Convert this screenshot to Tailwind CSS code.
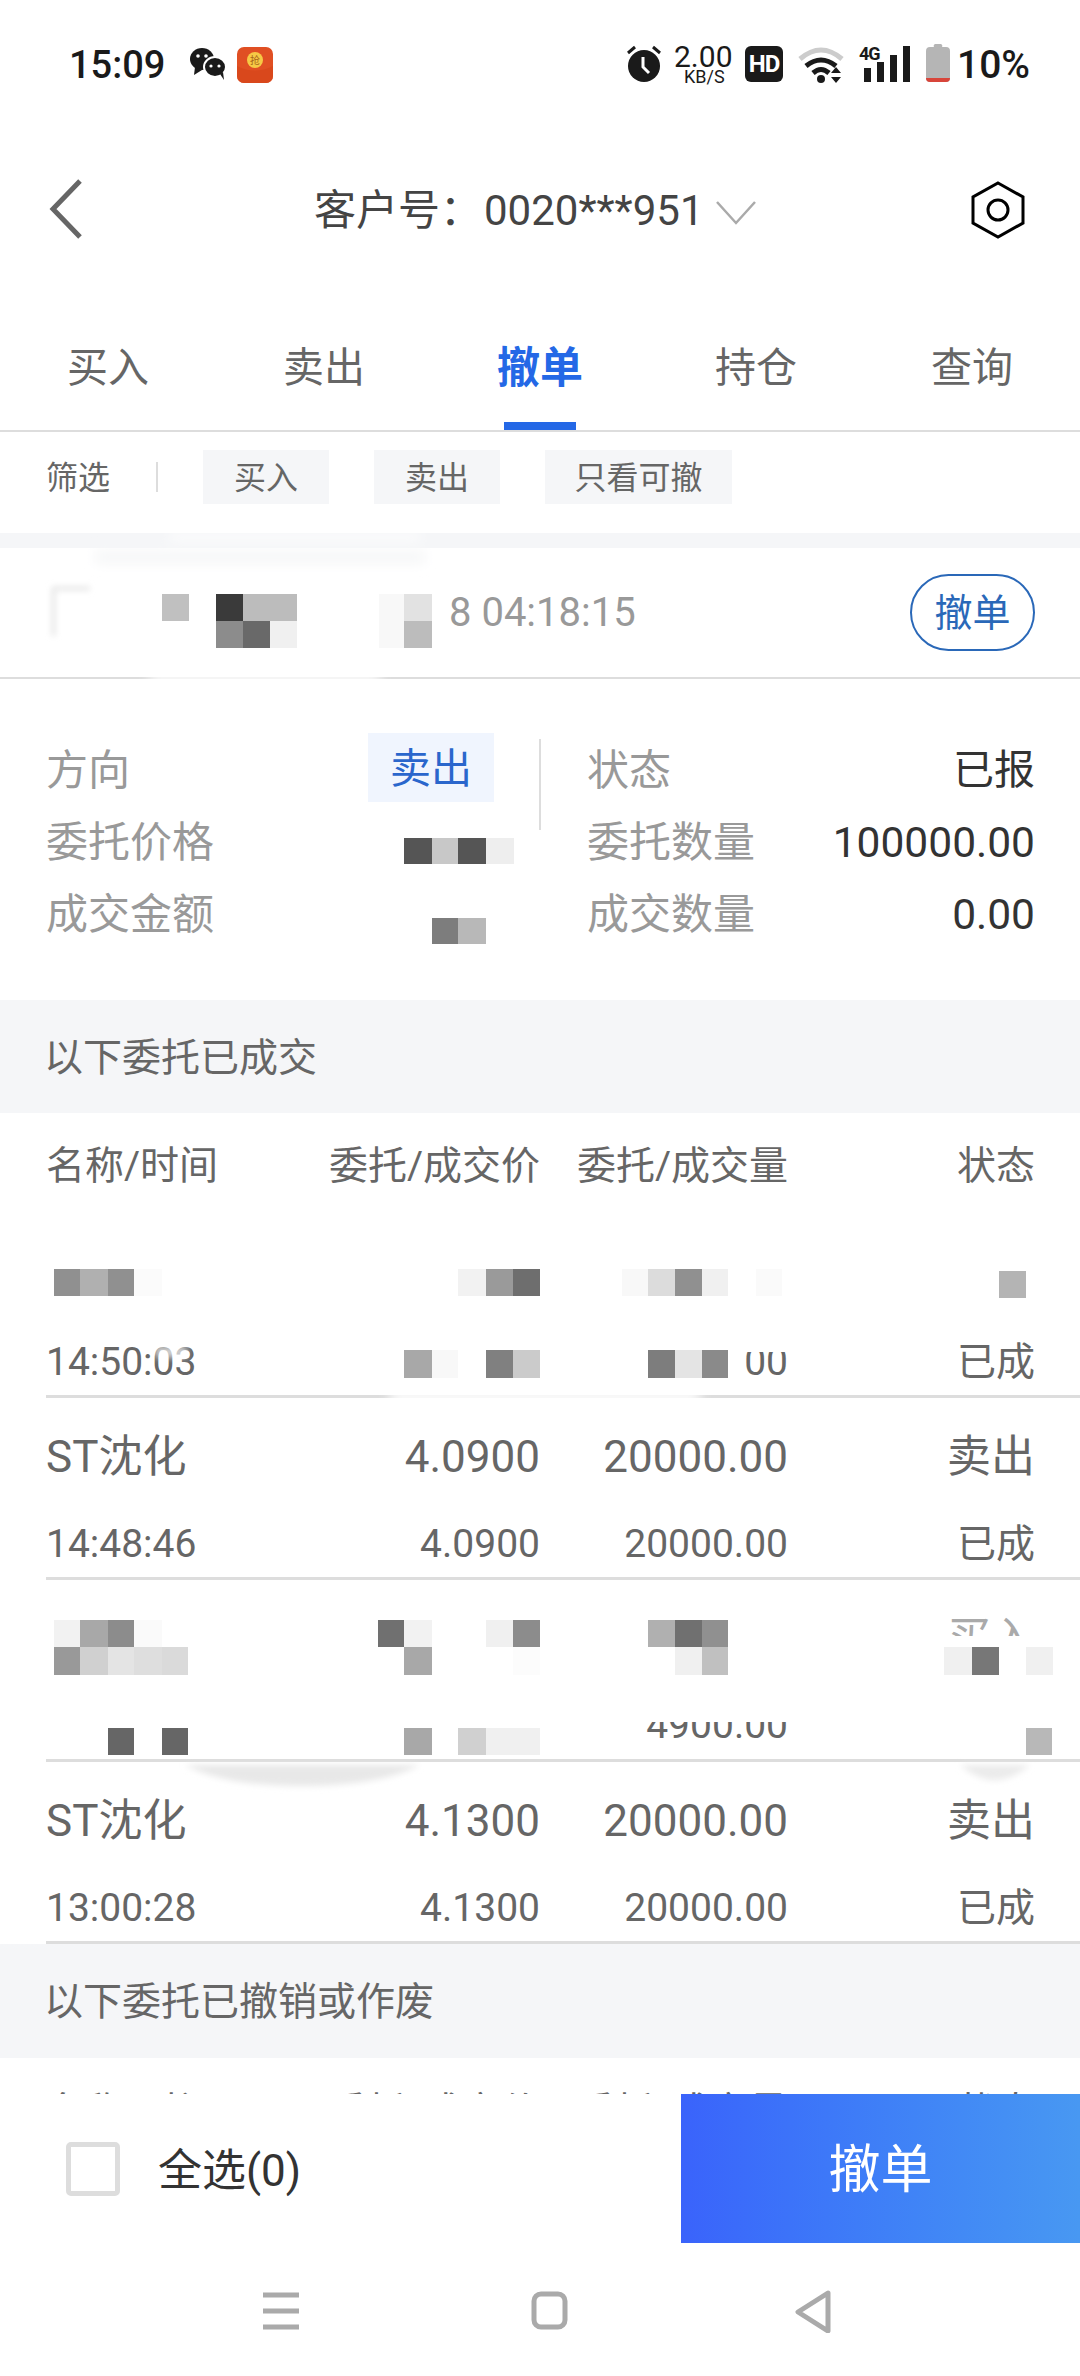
<!DOCTYPE html>
<html lang="zh-CN">
  <head>
    <meta charset="UTF-8" />
    <meta name="viewport" content="width=device-width, initial-scale=1.0" />
    <title>撤单</title>
    <script src="https://cdn.jsdelivr.net/npm/@tailwindcss/browser@4"></script>
  </head>
  <body>
    <main class="relative w-[1080px] h-[2376px] overflow-hidden bg-white font-['Roboto','Noto_Sans_CJK_SC',sans-serif] text-[#666]">
      <!-- Status bar -->
      <div class="h-[126px] relative">
        <span class="absolute left-[69px] top-[43px] text-[38px] leading-[44px] font-medium text-[#1a1a1a]">15:09</span>
        <svg class="absolute left-[188px] top-[44px]" width="90" height="40" viewBox="0 0 90 40">
          <ellipse cx="14" cy="15" rx="12" ry="11" fill="#1a1a1a" />
          <path d="M7 23l-1 8 8-5z" fill="#1a1a1a" />
          <ellipse cx="27" cy="23" rx="11" ry="10" fill="#1a1a1a" stroke="#fff" stroke-width="2" />
          <path d="M32 30l4 6-1-8z" fill="#1a1a1a" />
          <circle cx="10" cy="12" r="1.8" fill="#fff" /><circle cx="18" cy="12" r="1.8" fill="#fff" />
          <circle cx="23" cy="22" r="1.6" fill="#fff" /><circle cx="31" cy="22" r="1.6" fill="#fff" />
          <rect x="49" y="3" width="36" height="36" rx="7" fill="#e04f23" />
          <path d="M49 22q18 9 36 0v10a7 7 0 0 1-7 7H56a7 7 0 0 1-7-7z" fill="#d9481c" />
          <circle cx="67" cy="16" r="8" fill="#f6c945" />
          <text x="67" y="20" text-anchor="middle" font-size="10" fill="#a8641a">抢</text>
        </svg>
        <svg class="absolute left-[626px] top-[45px]" width="36" height="38" viewBox="0 0 36 38">
          <circle cx="18" cy="21" r="16" fill="#1a1a1a" />
          <path d="M2 8l7-6M34 8l-7-6" stroke="#1a1a1a" stroke-width="3" />
          <path d="M17 12v10l6 6" fill="none" stroke="#fff" stroke-width="3" />
        </svg>
        <span class="absolute left-[674px] top-[41px] text-[30px] leading-[32px] text-[#1a1a1a]">2.00</span>
        <span class="absolute left-[684px] top-[69px] text-[18px] leading-[16px] text-[#1a1a1a]">KB/S</span>
        <span class="absolute left-[745px] top-[46px] w-[38px] h-[36px] rounded-[6px] bg-[#1a1a1a] text-white text-[24px] leading-[36px] font-bold text-center tracking-[-1px]">HD</span>
        <svg class="absolute left-[798px] top-[45px]" width="48" height="38" viewBox="0 0 48 38">
          <path d="M2 14q21-18 42 0" fill="none" stroke="#ccc" stroke-width="5" />
          <path d="M8 21q15-12 30 0" fill="none" stroke="#1a1a1a" stroke-width="5" />
          <path d="M15 28q8-7 16 0" fill="none" stroke="#1a1a1a" stroke-width="5" />
          <circle cx="23" cy="34" r="4" fill="#1a1a1a" />
          <path d="M38 22l5 6h-10zM38 38l5-6h-10z" fill="#1a1a1a" />
        </svg>
        <span class="absolute left-[859px] top-[45px] text-[18px] leading-[17px] font-bold text-[#1a1a1a] tracking-[-1px]">4G</span>
        <svg class="absolute left-[864px] top-[46px]" width="46" height="36" viewBox="0 0 46 36">
          <rect x="0" y="22" width="7" height="14" fill="#1a1a1a" />
          <rect x="13" y="16" width="7" height="20" fill="#1a1a1a" />
          <rect x="26" y="9" width="7" height="27" fill="#1a1a1a" />
          <rect x="39" y="0" width="7" height="36" fill="#1a1a1a" />
        </svg>
        <svg class="absolute left-[926px] top-[44px]" width="24" height="38" viewBox="0 0 24 38">
          <path d="M8 3a2 2 0 0 1 2-3h4a2 2 0 0 1 2 3h4a4 4 0 0 1 4 4v27a4 4 0 0 1-4 4H4a4 4 0 0 1-4-4V7a4 4 0 0 1 4-4z" fill="#b5b5b5" />
          <path d="M0 34h24a4 4 0 0 1-4 4H4a4 4 0 0 1-4-4z" fill="#d8453a" />
        </svg>
        <span class="absolute left-[957px] top-[43px] text-[39px] leading-[44px] font-medium text-[#1a1a1a]">10%</span>
      </div>

      <!-- Header -->
      <div class="h-[168px] relative">
        <svg class="absolute left-[48px] top-[52px]" width="36" height="62" viewBox="0 0 36 62">
          <path d="M32 3L5 31l27 28" fill="none" stroke="#666" stroke-width="5" />
        </svg>
        <div class="flex items-center pl-[314px] pt-[61px] text-[42px] leading-[48px] text-[#444]">
          <span class="w-[170px]">客户号：</span><span>0020***951</span>
          <svg class="ml-[11px] mt-[4px]" width="42" height="26" viewBox="0 0 42 26">
            <path d="M2 2l19 21L40 2" fill="none" stroke="#aaa" stroke-width="2.5" />
          </svg>
        </div>
        <svg class="absolute left-[970px] top-[54px]" width="56" height="60" viewBox="0 0 56 60">
          <path d="M28 3l25 14v26L28 57 3 43V17z" fill="none" stroke="#000" stroke-width="3" />
          <circle cx="28" cy="30" r="10" fill="none" stroke="#000" stroke-width="3" />
        </svg>
      </div>

      <!-- Tabs -->
      <div class="h-[138px] flex border-b-2 border-[#ddd] text-[41px]">
        <div class="flex-1 flex justify-center pt-[49px] leading-[50px] text-[#666]">买入</div>
        <div class="flex-1 flex justify-center pt-[49px] leading-[50px] text-[#666]">卖出</div>
        <div class="flex-1 relative flex justify-center pt-[49px] leading-[50px] font-bold text-[#2468e6] text-[43px]">
          撤单
          <span class="absolute bottom-0 left-1/2 -translate-x-1/2 w-[72px] h-[8px] bg-[#2468e6]"></span>
        </div>
        <div class="flex-1 flex justify-center pt-[49px] leading-[50px] text-[#666]">持仓</div>
        <div class="flex-1 flex justify-center pt-[49px] leading-[50px] text-[#666]">查询</div>
      </div>

      <!-- Filters -->
      <div class="h-[101px] flex items-start pt-[18px] pl-[46px] text-[32px]">
        <span class="leading-[56px] w-[110px] relative">筛选
          <span class="absolute left-[110px] top-[12px] w-[2px] h-[30px] bg-[#ddd]"></span>
        </span>
        <span class="ml-[47px] w-[126px] h-[54px] leading-[56px] text-center bg-[#f5f6f8]">买入</span>
        <span class="ml-[45px] w-[126px] h-[54px] leading-[56px] text-center bg-[#f5f6f8]">卖出</span>
        <span class="ml-[45px] w-[187px] h-[54px] leading-[56px] text-center bg-[#f5f6f8]">只看可撤</span>
      </div>

      <div class="h-[15px] bg-[#f5f6f8]"></div>

      <!-- Open order -->
      <div class="h-[131px] flex items-center justify-between pl-[449px] pr-[45px] border-b-2 border-[#ddd]">
        <span class="text-[40px] text-[#999]">8 04:18:15</span>
        <button class="w-[125px] h-[77px] rounded-full border-2 border-[#2a68b8] text-[#2a68b8] text-[38px] leading-[70px]">撤单</button>
      </div>

      <!-- Order detail -->
      <div class="h-[321px] relative pt-[54px] pl-[46px] pr-[45px] grid grid-cols-[494px_1fr] text-[42px] leading-[75px] text-[#999]">
        <div>
          <div class="h-[72px] flex justify-between pr-[46px]">
            <span>方向</span>
            <span class="w-[126px] h-[69px] leading-[72px] text-center bg-[#f0f5fe] text-[#2a66cc] text-[41px]">卖出</span>
          </div>
          <div class="h-[72px]">委托价格</div>
          <div class="h-[72px]">成交金额</div>
        </div>
        <span class="absolute left-[539px] top-[60px] w-[2px] h-[91px] bg-[#ddd]"></span>
        <div class="pl-[47px]">
          <div class="h-[72px] flex justify-between"><span>状态</span><span class="text-[#333] text-[41px]">已报</span></div>
          <div class="h-[72px] flex justify-between"><span>委托数量</span><span class="text-[#333] text-[42.5px]">100000.00</span></div>
          <div class="h-[72px] flex justify-between"><span>成交数量</span><span class="text-[#333] text-[42.5px]">0.00</span></div>
        </div>
      </div>

      <div class="h-[113px] bg-[#f5f6f8] pl-[44px] text-[39px] leading-[117px]">以下委托已成交</div>

      <!-- Filled orders -->
      <div class="h-[103px] pl-[46px] pr-[45px] grid grid-cols-[300px_194px_248px_247px] text-[39px] leading-[107px] text-right whitespace-nowrap">
        <span class="text-left">名称/时间</span><span class="justify-self-end">委托/成交价</span><span class="justify-self-end">委托/成交量</span><span>状态</span>
      </div>

      <div class="ml-[46px] h-[182px] border-b-[3px] border-[#ddd] pr-[45px] text-right">
        <div class="h-[118px]"></div>
        <div class="grid grid-cols-[300px_194px_248px_247px] text-[39px] leading-[57px]">
          <span class="text-left">14:50:03</span><span></span><span>00</span><span>已成</span>
        </div>
      </div>
      <div class="ml-[46px] h-[182px] border-b-[3px] border-[#ddd] pr-[45px] text-right">
        <div class="h-[118px] grid grid-cols-[300px_194px_248px_247px] text-[44px] leading-[119px]">
          <span class="text-left">ST沈化</span><span>4.0900</span><span>20000.00</span><span>卖出</span>
        </div>
        <div class="grid grid-cols-[300px_194px_248px_247px] text-[39px] leading-[57px]">
          <span class="text-left">14:48:46</span><span>4.0900</span><span>20000.00</span><span>已成</span>
        </div>
      </div>
      <div class="ml-[46px] h-[182px] border-b-[3px] border-[#ddd] pr-[45px] text-right overflow-hidden">
        <div class="h-[118px] grid grid-cols-[300px_194px_248px_247px] text-[44px] leading-[119px]">
          <span></span><span></span><span></span><span class="text-[#aaa]">买入</span>
        </div>
        <div class="mt-[24px] h-[17px] overflow-hidden grid grid-cols-[300px_194px_248px_247px] text-[39px] leading-[57px]">
          <span></span><span></span><span class="mt-[-25px]">4900.00</span><span></span>
        </div>
      </div>
      <div class="ml-[46px] h-[182px] border-b-[3px] border-[#ddd] pr-[45px] text-right">
        <div class="h-[118px] grid grid-cols-[300px_194px_248px_247px] text-[44px] leading-[119px]">
          <span class="text-left">ST沈化</span><span>4.1300</span><span>20000.00</span><span>卖出</span>
        </div>
        <div class="grid grid-cols-[300px_194px_248px_247px] text-[39px] leading-[57px]">
          <span class="text-left">13:00:28</span><span>4.1300</span><span>20000.00</span><span>已成</span>
        </div>
      </div>

      <div class="h-[114px] bg-[#f5f6f8] pl-[44px] text-[39px] leading-[117px]">以下委托已撤销或作废</div>

      <!-- Cancelled orders header, cut off by the bottom bar -->
      <div class="h-[36px] overflow-hidden pl-[46px] pr-[45px] grid grid-cols-[300px_194px_248px_247px] text-[39px] leading-[108px] text-right whitespace-nowrap">
        <span class="text-left">名称/时间</span><span class="justify-self-end">委托/成交价</span><span class="justify-self-end">委托/成交量</span><span>状态</span>
      </div>

      <!-- Bottom action bar -->
      <div class="h-[149px] flex items-center bg-white">
        <span class="ml-[66px] w-[54px] h-[54px] border-[5px] border-[#ddd] rounded-[5px]"></span>
        <span class="ml-[38px] pt-[4px] text-[44px] text-[#333]">全选(0)</span>
        <button class="ml-auto w-[399px] h-full pt-[4px] bg-linear-to-r from-[#3a63fb] to-[#4898f2] text-white text-[52px]">撤单</button>
      </div>

      <!-- Navigation bar -->
      <div class="h-[133px] relative">
        <svg class="absolute left-[260px] top-[46px]" width="580" height="44" viewBox="0 0 580 44">
          <path d="M3 6h36M3 22h36M3 38h36" stroke="#aaa" stroke-width="5" />
          <rect x="274" y="5" width="31" height="33" rx="7" fill="none" stroke="#aaa" stroke-width="5" />
          <path d="M568 4L538 23l30 19z" fill="none" stroke="#aaa" stroke-width="5" stroke-linejoin="round" />
        </svg>
      </div>

      <!-- Mosaic and smudges laid over the redacted values -->
      <svg class="absolute left-0 top-0" width="1080" height="2376" viewBox="0 0 1080 2376">
        <defs>
          <filter id="soft"><feGaussianBlur stdDeviation="6" /></filter>
          <filter id="softer"><feGaussianBlur stdDeviation="3" /></filter>
        </defs>
        <g filter="url(#soft)">
          <rect x="170" y="534" width="250" height="6" fill="#fff" />
          <rect x="95" y="550" width="330" height="14" fill="#f6f7f8" />
          <rect x="390" y="1390" width="310" height="14" fill="#fff" />
          <rect x="150" y="672" width="230" height="12" fill="#fff" />
        </g>
        <g filter="url(#softer)">
          <path d="M52 587H90V590H55V636H52z" fill="#ddd" />
          <path d="M185 1765H420Q380 1786 300 1786Q225 1786 185 1765z" fill="#e8e8e8" />
          <path d="M960 1765H1030Q1010 1782 990 1780Q975 1778 960 1765z" fill="#ebebeb" />
          <rect x="155" y="1346" width="32" height="12" fill="#fff" fill-opacity="0.7" />
        </g>
        <g shape-rendering="crispEdges">
          <rect x="162" y="594" width="27" height="27" fill="#c0c0c0" />
          <rect x="216" y="594" width="27" height="27" fill="#3a3a3a" />
          <rect x="243" y="594" width="54" height="27" fill="#bcbcbc" />
          <rect x="216" y="621" width="27" height="27" fill="#8c8c8c" />
          <rect x="243" y="621" width="27" height="27" fill="#696969" />
          <rect x="270" y="621" width="27" height="27" fill="#f0f0f0" />
          <rect x="379" y="594" width="25" height="54" fill="#f8f8f8" />
          <rect x="404" y="594" width="28" height="27" fill="#e2e2e2" />
          <rect x="404" y="621" width="28" height="27" fill="#bcbcbc" />

          <rect x="404" y="838" width="28" height="26" fill="#555" />
          <rect x="432" y="838" width="26" height="26" fill="#c8c8c8" />
          <rect x="458" y="838" width="28" height="26" fill="#555" />
          <rect x="486" y="838" width="28" height="26" fill="#eee" />
          <rect x="432" y="918" width="26" height="26" fill="#7d7d7d" />
          <rect x="458" y="918" width="28" height="26" fill="#b8b8b8" />

          <rect x="54" y="1269" width="26" height="27" fill="#909090" />
          <rect x="80" y="1269" width="28" height="27" fill="#b0b0b0" />
          <rect x="108" y="1269" width="26" height="27" fill="#909090" />
          <rect x="134" y="1269" width="28" height="27" fill="#fbfbfb" />
          <rect x="458" y="1269" width="28" height="27" fill="#f2f2f2" />
          <rect x="486" y="1269" width="27" height="27" fill="#9a9a9a" />
          <rect x="513" y="1269" width="27" height="27" fill="#6e6e6e" />
          <rect x="622" y="1269" width="26" height="27" fill="#f8f8f8" />
          <rect x="648" y="1269" width="27" height="27" fill="#dcdcdc" />
          <rect x="675" y="1269" width="27" height="27" fill="#909090" />
          <rect x="702" y="1269" width="26" height="27" fill="#f0f0f0" />
          <rect x="756" y="1269" width="26" height="27" fill="#fafafa" />
          <rect x="999" y="1271" width="27" height="27" fill="#b4b4b4" />

          <rect x="404" y="1350" width="28" height="28" fill="#a8a8a8" />
          <rect x="432" y="1350" width="26" height="28" fill="#f8f8f8" />
          <rect x="486" y="1350" width="27" height="28" fill="#808080" />
          <rect x="513" y="1350" width="27" height="28" fill="#cbcbcb" />
          <rect x="648" y="1350" width="27" height="28" fill="#7d7d7d" />
          <rect x="675" y="1350" width="27" height="28" fill="#e4e4e4" />
          <rect x="702" y="1350" width="26" height="28" fill="#8a8a8a" />
          <rect x="738" y="1338" width="55" height="14" fill="#fff" />

          <rect x="54" y="1620" width="26" height="27" fill="#f2f2f2" />
          <rect x="80" y="1620" width="28" height="27" fill="#a8a8a8" />
          <rect x="108" y="1620" width="26" height="27" fill="#8c8c8c" />
          <rect x="134" y="1620" width="28" height="27" fill="#fafafa" />
          <rect x="54" y="1647" width="26" height="28" fill="#999" />
          <rect x="80" y="1647" width="28" height="28" fill="#d0d0d0" />
          <rect x="108" y="1647" width="26" height="28" fill="#e4e4e4" />
          <rect x="134" y="1647" width="28" height="28" fill="#dedede" />
          <rect x="162" y="1647" width="26" height="28" fill="#dadada" />
          <rect x="378" y="1620" width="26" height="27" fill="#707070" />
          <rect x="404" y="1620" width="28" height="27" fill="#f2f2f2" />
          <rect x="404" y="1647" width="28" height="28" fill="#a8a8a8" />
          <rect x="486" y="1620" width="27" height="27" fill="#f0f0f0" />
          <rect x="513" y="1620" width="27" height="27" fill="#8c8c8c" />
          <rect x="513" y="1647" width="27" height="28" fill="#fcfcfc" />
          <rect x="648" y="1620" width="27" height="27" fill="#b0b0b0" />
          <rect x="675" y="1620" width="27" height="27" fill="#707070" />
          <rect x="702" y="1620" width="26" height="27" fill="#909090" />
          <rect x="675" y="1647" width="27" height="28" fill="#f0f0f0" />
          <rect x="702" y="1647" width="26" height="28" fill="#c0c0c0" />
          <rect x="940" y="1636" width="100" height="11" fill="#fff" />
          <rect x="944" y="1647" width="28" height="28" fill="#f0f0f0" />
          <rect x="972" y="1647" width="27" height="28" fill="#777" />
          <rect x="999" y="1647" width="27" height="28" fill="#fff" />
          <rect x="1026" y="1647" width="27" height="28" fill="#f0f0f0" />

          <rect x="108" y="1728" width="26" height="27" fill="#666" />
          <rect x="162" y="1728" width="26" height="27" fill="#666" />
          <rect x="404" y="1728" width="28" height="27" fill="#a8a8a8" />
          <rect x="458" y="1728" width="28" height="27" fill="#d0d0d0" />
          <rect x="486" y="1728" width="54" height="27" fill="#f0f0f0" />
          <rect x="1026" y="1728" width="26" height="27" fill="#b8b8b8" />
        </g>
      </svg>
    </main>
  </body>
</html>
